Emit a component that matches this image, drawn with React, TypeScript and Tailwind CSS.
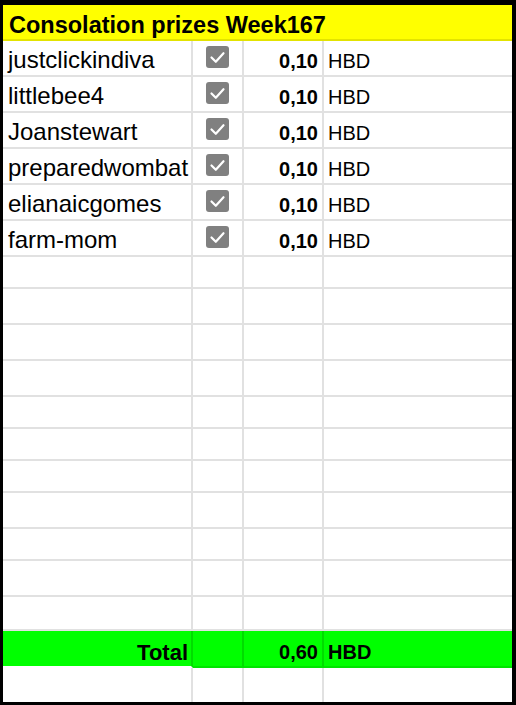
import React from "react";

const font = { fontFamily: '"Liberation Sans", Arial, sans-serif' };

type RowDef = { name?: string; h: string };

const data: RowDef[] = [
  { name: "justclickindiva", h: "h-[36px]" },
  { name: "littlebee4", h: "h-[36px]" },
  { name: "Joanstewart", h: "h-[36px]" },
  { name: "preparedwombat", h: "h-[36px]" },
  { name: "elianaicgomes", h: "h-[36px]" },
  { name: "farm-mom", h: "h-[36px]" },
  { h: "h-[32px]" },
  { h: "h-[36px]" },
  { h: "h-[36px]" },
  { h: "h-[36px]" },
  { h: "h-[32px]" },
  { h: "h-[32px]" },
  { h: "h-[32px]" },
  { h: "h-[36px]" },
  { h: "h-[32px]" },
  { h: "h-[36px]" },
  { h: "h-[34px]" },
];

function Check() {
  return (
    <svg width="23" height="22" viewBox="0 0 23 22">
      <rect x="0" y="0" width="23" height="22" rx="3" fill="#808080" />
      <polyline
        points="5.5,11.5 9.8,15.8 17.5,7.2"
        fill="none"
        stroke="#ffffff"
        strokeWidth="2.2"
        strokeLinecap="round"
        strokeLinejoin="round"
      />
    </svg>
  );
}

export default function App() {
  return (
    <div
      className="w-[516px] h-[705px] bg-black pt-[5px] pl-[3px] pr-[4px] pb-[3px] overflow-hidden"
      style={font}
    >
      <div className="w-[509px] h-[697px] bg-white flex flex-col text-black">
        <div className="h-[36px] bg-[#ffff00] border-b-2 border-[#e3e300] flex items-end pl-[6px] pb-[2px]">
          <span className="text-[23.5px] leading-none font-bold">
            Consolation prizes Week167
          </span>
        </div>
        {data.map((r, i) => (
          <div
            key={i}
            className={`grid grid-cols-[190px_51px_80px_188px] ${r.h}`}
          >
            <div className="border-r-2 border-b-2 border-[#e1e1e1] flex items-end pl-[5px] pb-[3px] overflow-hidden whitespace-nowrap">
              {r.name && (
                <span className="text-[24px] leading-none">{r.name}</span>
              )}
            </div>
            <div className="border-r-2 border-b-2 border-[#e1e1e1] flex justify-center items-start pt-[5px]">
              {r.name && <Check />}
            </div>
            <div className="border-r-2 border-b-2 border-[#e1e1e1] flex items-end justify-end pr-[4px] pb-[4px]">
              {r.name && (
                <span className="text-[20px] leading-none font-bold">0,10</span>
              )}
            </div>
            <div className="border-b-2 border-[#e1e1e1] flex items-end pl-[4px] pb-[4px]">
              {r.name && <span className="text-[20px] leading-none">HBD</span>}
            </div>
          </div>
        ))}
        <div className="grid grid-cols-[190px_51px_80px_188px] h-[37px] bg-[#00ff00]">
          <div className="border-r-2 border-r-[#00dc00] border-b-2 border-b-white flex items-end justify-end pr-[3px] pb-[2px]">
            <span className="text-[22px] leading-none font-bold">Total</span>
          </div>
          <div className="border-r-2 border-r-[#00dc00] border-b-2 border-b-[#00e400]" />
          <div className="border-r-2 border-r-[#00dc00] border-b-2 border-b-[#00e400] flex items-end justify-end pr-[4px] pb-[4px]">
            <span className="text-[20px] leading-none font-bold">0,60</span>
          </div>
          <div className="border-b-2 border-b-[#00e400] flex items-end pl-[4px] pb-[4px]">
            <span className="text-[20px] leading-none font-bold">HBD</span>
          </div>
        </div>
        <div className="grid grid-cols-[190px_51px_80px_188px] h-[34px]">
          <div className="border-r-2 border-[#e1e1e1]" />
          <div className="border-r-2 border-[#e1e1e1]" />
          <div className="border-r-2 border-[#e1e1e1]" />
          <div />
        </div>
      </div>
    </div>
  );
}
